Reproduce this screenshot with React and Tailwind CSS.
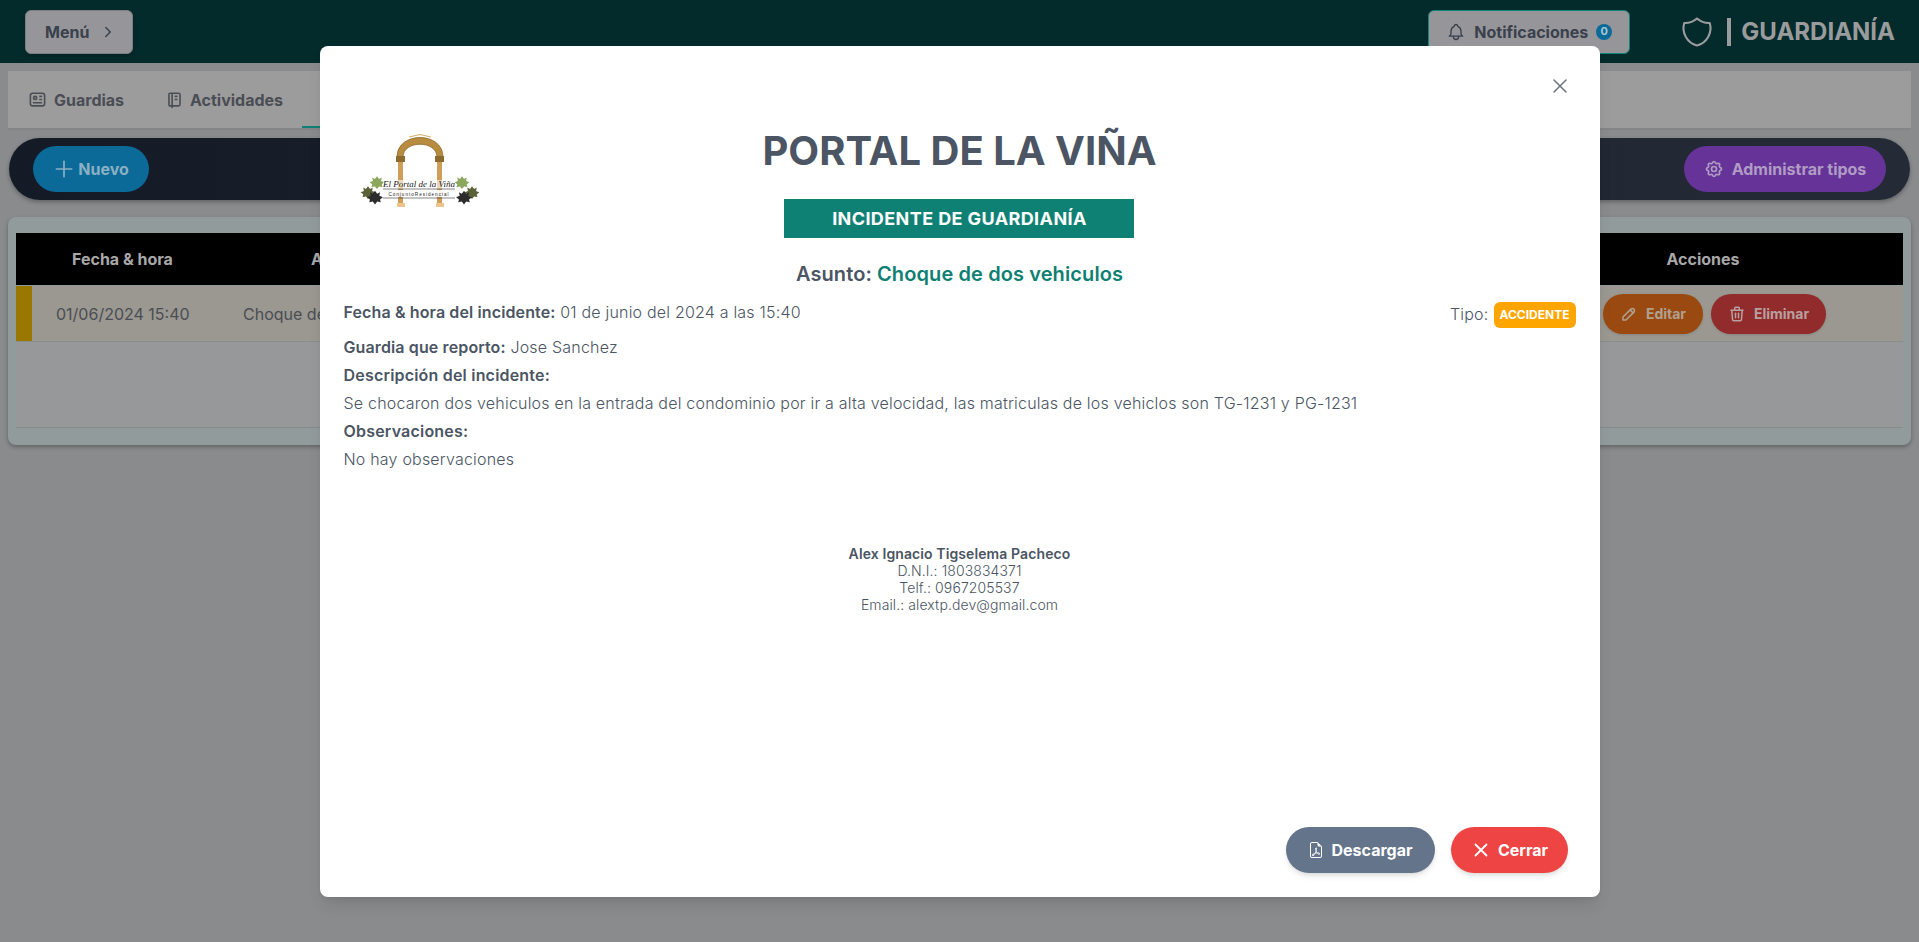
import React from "react";
import { TbBell, TbShield, TbPlus, TbSettings, TbPencil, TbTrash, TbChevronRight, TbX, TbNotebook, TbId, TbAlertTriangle } from "react-icons/tb";
import { BsFileEarmarkPdf } from "react-icons/bs";

function Logo() {
  const leaf = "M0 -10 L3 -6 L7 -8 L6 -3 L11 -1 L7 2 L8 6 L3 5 L0 9 L-3 5 L-8 6 L-7 2 L-11 -1 L-6 -3 L-7 -8 L-3 -6 Z";
  return (
    <svg width="120" height="76" viewBox="0 0 120 76" className="block">
      <path d="M38 24 C38 -2 84 -2 84 24 L78 24 C78 7 44 7 44 24 Z" fill="#b98b3e" stroke="#8f6a2a" strokeWidth="0.8" />
      <path d="M50 4 L61 1.5 L72 4" fill="none" stroke="#d8b26a" strokeWidth="1.2" />
      <rect x="37" y="23" width="9" height="6" fill="#8d6a30" />
      <rect x="76" y="23" width="9" height="6" fill="#8d6a30" />
      <rect x="39" y="29" width="5" height="41" fill="#cf9f5a" />
      <rect x="78" y="29" width="5" height="41" fill="#cf9f5a" />
      <rect x="38" y="70" width="8" height="4" fill="#eec48c" />
      <rect x="77" y="70" width="8" height="4" fill="#eec48c" />
      <g transform="translate(18 50) scale(.68)"><path d={leaf} fill="#8aa75b" /></g>
      <g transform="translate(9 60) scale(.68)"><path d={leaf} fill="#5b6237" /></g>
      <g transform="translate(16 65) scale(.72)"><path d={leaf} fill="#2c2c2c" /></g>
      <g transform="translate(103 50) scale(.68)"><path d={leaf} fill="#8aa75b" /></g>
      <g transform="translate(113 60) scale(.68)"><path d={leaf} fill="#5b6237" /></g>
      <g transform="translate(105 65) scale(.72)"><path d={leaf} fill="#2c2c2c" /></g>
      <rect x="24" y="47" width="72" height="9" fill="#ffffff" fillOpacity=".6" />
      <text x="60" y="54" textAnchor="middle" fontFamily="Liberation Serif, serif" fontStyle="italic" fontSize="9" fill="#222">El Portal de la Viña</text>
      <line x1="24" y1="56" x2="96" y2="56" stroke="#333" strokeWidth=".6" />
      <rect x="24" y="57" width="72" height="7" fill="#ffffff" fillOpacity=".9" />
      <text x="60" y="62.5" textAnchor="middle" fontFamily="Liberation Sans, sans-serif" fontSize="4.6" letterSpacing="1" fill="#222">ConjuntoResidencial</text>
      <line x1="24" y1="65" x2="96" y2="65" stroke="#333" strokeWidth=".6" />
    </svg>
  );
}

export default function App() {
  return (
    <div className="relative h-[942px] w-full overflow-hidden bg-[#8a8b8d] font-['Inter',sans-serif] text-[#3f4652]">
      <header className="flex h-[63px] items-center justify-between bg-[#042b2b] pl-[25px] pr-6">
        <button className="flex h-11 w-[108px] items-center gap-[10px] rounded-md border border-[#7e7e82] bg-[#96969a] pl-[19px] text-[16px] font-bold text-[#3a404c] shadow-md">
          Menú <TbChevronRight size={18} />
        </button>
        <div className="flex items-center">
          <button className="flex h-11 w-[202px] items-center justify-center gap-2 rounded-md border border-[#148378] bg-[#96969a] text-[16px] font-bold text-[#3a404c]">
            <TbBell size={20} strokeWidth={1.6} />
            Notificaciones
            <span className="flex h-4 w-4 items-center justify-center rounded-full bg-[#0b6a97] text-[11px] font-bold text-[#a8c8d8]">0</span>
          </button>
          <TbShield size={36} strokeWidth={1.4} className="ml-[49px] text-[#9a9b9d]" />
          <span className="ml-3 h-7 w-[4px] bg-[#9a9b9d]" />
          <span className="ml-[10px] text-[24px] font-bold leading-8 text-[#9a9b9d]">GUARDIANÍA</span>
        </div>
      </header>

      <nav className="mx-2 mt-2 flex h-[57px] items-stretch bg-[#9c9c9c] pl-5 text-[#4a4d54] shadow-[0_2px_0_#858585]">
        <div className="flex w-[137px] items-center gap-[7px] text-[16px] font-bold"><TbId size={19} />Guardias</div>
        <div className="flex w-[137px] items-center gap-[6px] text-[16px] font-bold"><TbNotebook size={19} />Actividades</div>
        <div className="flex items-center gap-2 border-b-2 border-[#0f8174] pl-8 pr-5 text-[16px] font-bold text-[#0f8174]"><TbAlertTriangle size={18} />Incidentes</div>
      </nav>

      <section className="mx-[9px] mt-[10px] flex h-[62px] items-center justify-between rounded-full bg-gradient-to-r from-[#141a26] to-[#242a36] px-6 shadow-[0_2px_4px_rgba(0,0,0,.3)]">
        <button className="flex h-[46px] w-[116px] items-center justify-center gap-[1px] rounded-full bg-[#0b6a97] pr-[2px] text-[16px] font-bold text-[#8ab0c4]">
          <TbPlus size={26} strokeWidth={1.6} />Nuevo
        </button>
        <button className="flex h-[46px] w-[202px] items-center justify-center gap-2 rounded-full bg-[#663399] text-[16px] font-bold text-[#b09cc4]">
          <TbSettings size={20} />Administrar tipos
        </button>
      </section>

      <section className="mx-2 mt-[17px] h-[228px] rounded-lg bg-[#929b9b] p-2 pt-4 shadow-[0_2px_4px_rgba(0,0,0,.3)]">
        <div className="flex h-[52px] items-center bg-black text-[16px] font-bold text-[#a8a8a8]">
          <span className="ml-14 w-[239px]">Fecha &amp; hora</span>
          <span className="w-[1290px]">Asunto</span>
          <span className="w-[204px] text-center">Acciones</span>
        </div>
        <div className="mt-px flex h-[56px] items-center border-b border-[#8a8f8c] bg-[#9a9890] text-[16px] text-[#4a4d54]">
          <span className="h-full w-4 bg-[#997700]" />
          <span className="ml-6 w-[187px]">01/06/2024 15:40</span>
          <span className="w-[1360px]">Choque de dos vehiculos</span>
          <button className="flex h-10 w-[100px] items-center justify-center gap-2 rounded-full bg-[#9a4a10] text-[14px] font-bold text-[#b0a090] shadow">
            <TbPencil size={18} />Editar
          </button>
          <button className="ml-2 flex h-10 w-[115px] items-center justify-center gap-2 rounded-full bg-[#922b2b] text-[14px] font-bold text-[#b8a0a0] shadow">
            <TbTrash size={18} />Eliminar
          </button>
        </div>
        <div className="h-[86px] border-b border-[#858b8b] bg-[#97989a]" />
      </section>

      <div className="absolute inset-0 flex items-center justify-center">
        <div className="relative flex h-[851px] w-[1280px] flex-col rounded-lg bg-white shadow-lg">
          <button className="absolute right-[28px] top-[28px] text-[#6b7280]"><TbX size={24} strokeWidth={1.5} /></button>

          <div className="grid grid-cols-[1fr_auto_1fr] pt-[76px]">
            <div className="pl-[39px] pt-[11px]"><Logo /></div>
            <div className="flex flex-col items-center">
              <h1 className="text-[40px] font-bold leading-[58px] text-[#4b5563]">PORTAL DE LA VIÑA</h1>
              <div className="mt-[19px] flex h-[39px] w-[350px] items-center justify-center bg-[#0f8174] text-[18px] font-bold tracking-[0.4px] text-white">INCIDENTE DE GUARDIANÍA</div>
              <h2 className="mt-[22px] text-[20px] font-semibold leading-7 tracking-[0.1px] text-[#4b5563]">Asunto: <span className="text-[#0f7f72]">Choque de dos vehiculos</span></h2>
            </div>
            <div />
          </div>

          <div className="px-6 pt-[10px] text-[16px] leading-7 tracking-[0.2px] text-[#4b5563]">
            <div className="flex items-center justify-between">
              <p className="font-light"><b className="font-semibold tracking-[0.12px]">Fecha &amp; hora del incidente:</b> 01 de junio del 2024 a las 15:40</p>
              <p className="flex items-center gap-[5px] font-light"><span className="relative top-[2px]">Tipo:</span> <span className="relative top-[3px] rounded-md bg-[#ffa500] px-[6px] py-[5px] text-[12px] font-bold leading-4 tracking-normal text-white">ACCIDENTE</span></p>
            </div>
            <p className="mt-[7px] font-light"><b className="font-semibold tracking-[0.12px]">Guardia que reporto:</b> Jose Sanchez</p>
            <p className="font-semibold">Descripción del incidente:</p>
            <p className="font-light">Se chocaron dos vehiculos en la entrada del condominio por ir a alta velocidad, las matriculas de los vehiclos son TG-1231 y PG-1231</p>
            <p className="font-semibold">Observaciones:</p>
            <p className="font-light">No hay observaciones</p>
          </div>

          <div className="mt-[72px] text-center text-[14px] font-light leading-[17px] tracking-[0.1px] text-[#4b5563]">
            <p className="font-semibold">Alex Ignacio Tigselema Pacheco</p>
            <p>D.N.I.: 1803834371</p>
            <p>Telf.: 0967205537</p>
            <p>Email.: alextp.dev@gmail.com</p>
          </div>

          <div className="mt-auto flex justify-end gap-4 pb-6 pr-8">
            <button className="flex h-[46px] w-[149px] items-center justify-center gap-2 rounded-full bg-[#64748b] text-[16px] font-bold text-white shadow-md">
              <BsFileEarmarkPdf size={16} />Descargar
            </button>
            <button className="flex h-[46px] w-[117px] items-center justify-center gap-[6px] rounded-full bg-[#ef4444] text-[16px] font-bold text-white shadow-md">
              <TbX size={22} />Cerrar
            </button>
          </div>
        </div>
      </div>
    </div>
  );
}
